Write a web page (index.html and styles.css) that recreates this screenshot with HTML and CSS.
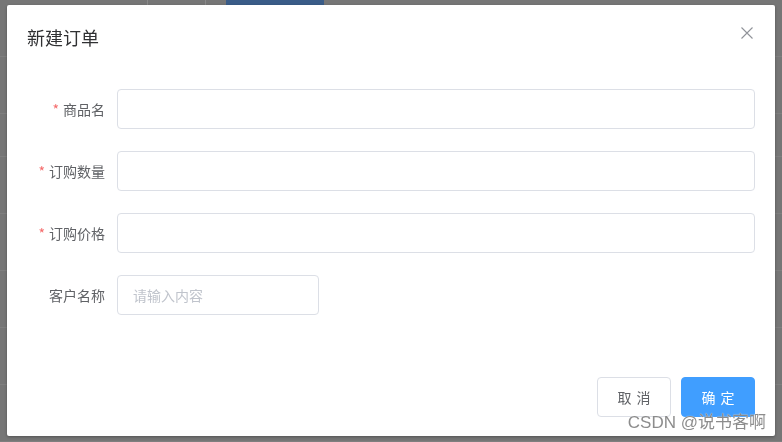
FILE: index.html
```html
<!DOCTYPE html>
<html lang="zh">
<head>
<meta charset="utf-8">
<link rel="stylesheet" href="styles.css">
</head>
<body>
<div class="page">
  <div class="toolbar">
    <span class="tool-btn"></span>
    <span class="tool-primary"></span>
  </div>
</div>
<div class="overlay">
  <div class="dialog">
    <div class="dialog-header">
      <span class="dialog-title">新建订单</span>
      <button class="dialog-close" aria-label="close">
        <svg width="12" height="12" viewBox="0 0 12 12"><path d="M0.5 0.5 L11.5 11.5 M11.5 0.5 L0.5 11.5" stroke="#909399" stroke-width="1.1" fill="none"/></svg>
      </button>
    </div>
    <div class="dialog-body">
      <div class="form-item">
        <label class="form-label required">商品名</label>
        <div class="form-content"><input class="input" type="text"></div>
      </div>
      <div class="form-item">
        <label class="form-label required">订购数量</label>
        <div class="form-content"><input class="input" type="text"></div>
      </div>
      <div class="form-item">
        <label class="form-label required">订购价格</label>
        <div class="form-content"><input class="input" type="text"></div>
      </div>
      <div class="form-item">
        <label class="form-label">客户名称</label>
        <div class="form-content"><input class="input input-short" type="text" placeholder="请输入内容"></div>
      </div>
    </div>
    <div class="dialog-footer">
      <button class="btn">取 消</button>
      <button class="btn btn-primary">确 定</button>
    </div>
  </div>
  <div class="watermark">CSDN @说书客啊</div>
</div>
</body>
</html>
```

FILE: styles.css
```css
* { box-sizing: border-box; }
html, body { margin: 0; padding: 0; }
body {
  width: 782px;
  height: 442px;
  overflow: hidden;
  font-family: "Noto Sans CJK SC", "Liberation Sans", sans-serif;
  background-color: #767676;
  background-image: repeating-linear-gradient(to bottom, transparent 0, transparent 21px, #7f7f7f 21px, #7f7f7f 22px, transparent 22px, transparent 57px);
  background-position: 0 135px;
}
.page { height: 442px; }
.toolbar {
  display: flex;
  align-items: flex-end;
  height: 5px;
  padding-left: 147px;
  gap: 20px;
}
.tool-btn {
  width: 59px;
  height: 20px;
  border-left: 1px solid #8a8a8a;
  border-right: 1px solid #8a8a8a;
}
.tool-primary {
  width: 98px;
  height: 20px;
  background: #3a5c88;
}
.overlay {
  position: fixed;
  inset: 0;
}
.dialog {
  position: absolute;
  left: 7px;
  top: 5px;
  width: 768px;
  height: 431px;
  background: #fff;
  border-radius: 2px;
  box-shadow: 0 1px 3px rgba(0,0,0,.3);
  display: flex;
  flex-direction: column;
}
.dialog-header {
  position: relative;
  padding: 20px 20px 10px;
}
.dialog-title {
  display: block;
  font-size: 18px;
  line-height: 24px;
  color: #303133;
}
.dialog-close {
  position: absolute;
  top: 22px;
  right: 22px;
  width: 12px;
  height: 12px;
  padding: 0;
  border: 0;
  background: none;
  display: flex;
}
.dialog-body {
  padding: 30px 20px;
  display: flex;
  flex-direction: column;
  gap: 22px;
}
.form-item {
  display: flex;
  align-items: center;
  height: 40px;
}
.form-label {
  width: 90px;
  flex: none;
  padding-right: 12px;
  text-align: right;
  font-size: 14px;
  line-height: 40px;
  color: #606266;
}
.form-label.required::before {
  content: "*";
  color: #f56c6c;
  margin-right: 4px;
}
.form-content { flex: 1; display: flex; }
.input {
  width: 100%;
  height: 40px;
  border: 1px solid #dcdfe6;
  border-radius: 4px;
  padding: 0 15px;
  font-family: inherit;
  font-size: 14px;
  color: #606266;
  outline: none;
  background: #fff;
}
.input-short { width: 202px; }
.input::placeholder { color: #c0c4cc; }
.dialog-footer {
  margin-top: auto;
  padding: 0 20px 19px;
  display: flex;
  justify-content: flex-end;
  gap: 10px;
}
.btn {
  width: 74px;
  height: 40px;
  border: 1px solid #dcdfe6;
  border-radius: 4px;
  background: #fff;
  color: #606266;
  font-family: inherit;
  font-size: 14px;
  letter-spacing: 1px;
  padding: 0 0 0 1px;
}
.btn-primary {
  background: #409eff;
  border-color: #409eff;
  color: #fff;
}
.watermark {
  position: absolute;
  right: 16px;
  top: 411px;
  font-size: 17px;
  line-height: 24px;
  color: rgba(120,120,120,0.85);
  text-shadow: 0 0 1px #fff;
  font-family: "Liberation Sans", "Noto Sans CJK SC", sans-serif;
}
```
